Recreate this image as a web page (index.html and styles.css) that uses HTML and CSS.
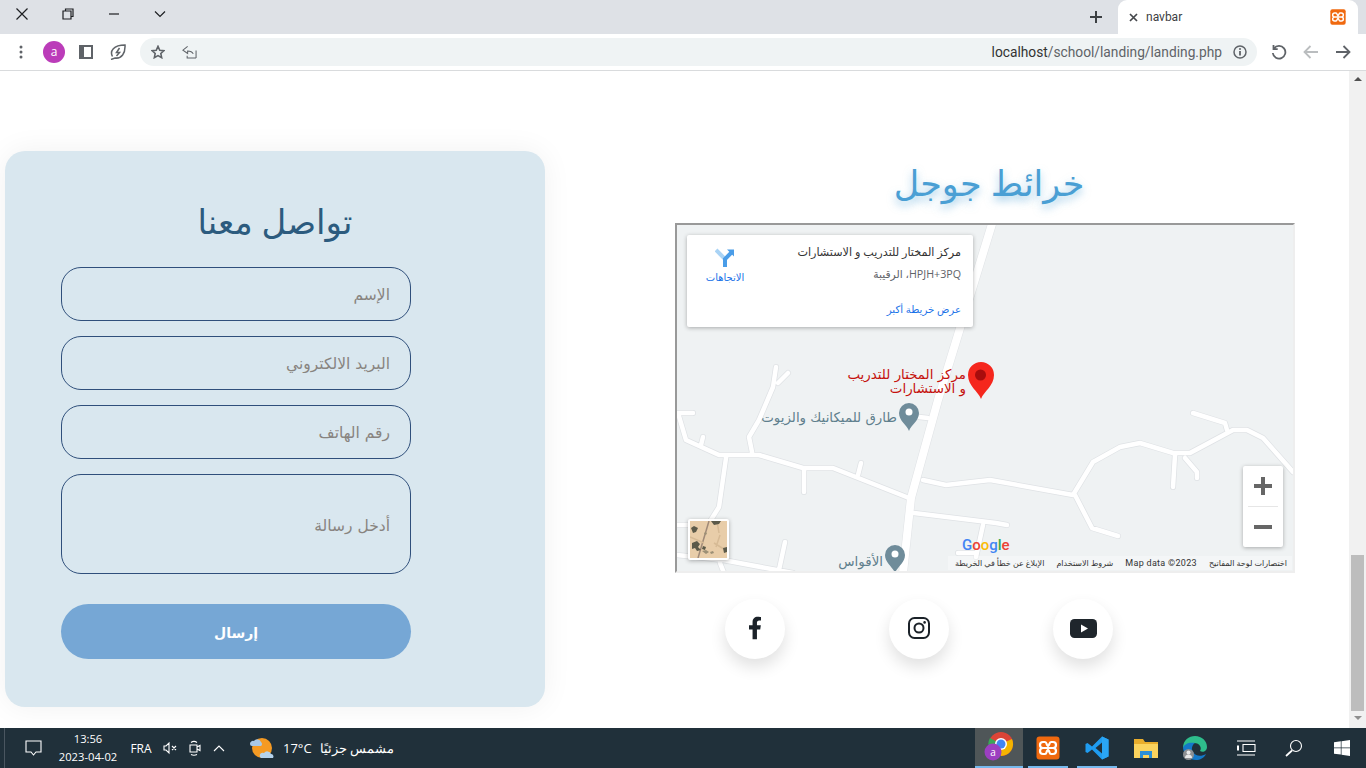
FILE: index.html
```html
<!DOCTYPE html>
<html lang="ar">
<head>
<meta charset="utf-8">
<title>navbar</title>
<link rel="stylesheet" href="styles.css">
</head>
<body>
<svg class="defs" width="0" height="0" aria-hidden="true">
  <symbol id="xampp" viewBox="0 0 24 24">
    <rect x="0.5" y="0.5" width="23" height="23" rx="3" fill="#f0690f"/>
    <path d="M9 6H7a3 3 0 0 0 0 6h2m0-6c2 0 1 3 3 4 2-1 1-4 3-4h2a3 3 0 0 1 0 6h-2c-1.500 0-2 0-3 0s-1.500 0-3 0M9 12H7a3 3 0 0 0 0 6h2c2 0 1-3 3-4 2 1 1 4 3 4h2a3 3 0 0 0 0-6h-2" fill="none" stroke="#fff" stroke-width="2.200"/>
  </symbol>
</svg>

<div class="window">
  <header class="tabbar">
    <div class="winbtn"><svg width="14" height="14" viewBox="0 0 14 14"><path d="M1.500 1.500l11 11m0-11l-11 11" class="s-dark"/></svg></div>
    <div class="winbtn"><svg width="12" height="12" viewBox="0 0 12 12"><path d="M3.500 2.500V1h7.500v7.500H9M1 3h8v8H1z" class="s-dark"/></svg></div>
    <div class="winbtn"><svg width="12" height="12" viewBox="0 0 12 12"><path d="M1 6h10" class="s-dark"/></svg></div>
    <div class="winbtn"><svg width="12" height="12" viewBox="0 0 12 12"><path d="M1 3.500l5 5 5-5" class="s-dark"/></svg></div>
    <div class="tab-spacer"></div>
    <div class="newtab"><svg width="12" height="12" viewBox="0 0 12 12"><path d="M6 0v12M0 6h12" class="s-plus"/></svg></div>
    <div class="tab">
      <svg class="tab-close" width="9" height="9" viewBox="0 0 9 9"><path d="M1 1l7 7m0-7L1 8" class="s-tabx"/></svg>
      <span class="tab-title">navbar</span>
      <svg class="favicon" width="16" height="16"><use href="#xampp"/></svg>
    </div>
  </header>

  <nav class="toolbar">
    <div class="tool w-dots"><svg width="4" height="14" viewBox="0 0 4 14"><circle cx="2" cy="2" r="1.500" class="f-grey"/><circle cx="2" cy="7" r="1.500" class="f-grey"/><circle cx="2" cy="12" r="1.500" class="f-grey"/></svg></div>
    <div class="tool w-avatar"><span class="avatar">a</span></div>
    <div class="tool w-panel"><svg width="14" height="14" viewBox="0 0 14 14"><path d="M0 0h14v14H0zM5 2v10h7V2z" fill="#5f6368" fill-rule="evenodd"/></svg></div>
    <div class="tool w-leaf"><svg width="16" height="16" viewBox="0 0 16 16"><path d="M2.500 12.500C-.5 7 3.500 1 15 1c.5 8.500-3.500 14-10 13L1 15.500M9.500 4L6.500 8.500h3L6.500 12" class="s-grey15"/></svg></div>
    <div class="omnibox">
      <svg class="omni-star" width="14" height="14" viewBox="0 0 16 16"><path d="M8 1.500l2 4.500 4.800.5-3.600 3.200 1 4.800L8 12.100l-4.200 2.400 1-4.800L1.200 6.500 6 6z" class="s-grey2"/></svg>
      <svg class="omni-share" width="15" height="14" viewBox="0 0 16 14"><path d="M6 1L1 5l5 3.500V6c3 0 5 1 6 3M15 13.500H5.500V11M15 13.500V5.500" class="s-grey1"/></svg>
      <div class="url"><span class="url-host">localhost</span>/school/landing/landing.php</div>
      <svg class="omni-info" width="14" height="14" viewBox="0 0 14 14"><circle cx="7" cy="7" r="6" class="s-grey15"/><path d="M7 6v4.500" class="s-grey2"/><circle cx="7" cy="3.900" r="1" class="f-grey"/></svg>
    </div>
    <div class="tool w-nav nav-first"><svg width="16" height="16" viewBox="0 0 16 16"><path d="M3 4.500A6.300 6.300 0 1 1 1.800 9M2.500 1v4.200h4.200" class="s-grey2"/></svg></div>
    <div class="tool w-nav"><svg width="16" height="14" viewBox="0 0 16 14"><path d="M15 7H2M7.500 1L1.500 7l6 6" class="s-light"/></svg></div>
    <div class="tool w-nav"><svg width="16" height="14" viewBox="0 0 16 14"><path d="M1 7h13M8.500 1l6 6-6 6" class="s-grey2"/></svg></div>
  </nav>

  <div class="viewport">
    <main class="page">
      <section class="contact-card">
        <h2 class="contact-title" dir="rtl">تواصل معنا</h2>
        <form class="contact-form" dir="rtl">
          <input class="field" type="text" placeholder="الإسم">
          <input class="field" type="email" placeholder="البريد الالكتروني">
          <input class="field" type="tel" placeholder="رقم الهاتف">
          <div class="field field-area"><span class="area-ph">أدخل رسالة</span></div>
          <button class="send" type="button">إرسال</button>
        </form>
      </section>

      <section class="map-col">
        <h1 class="map-title" dir="rtl">خرائط جوجل</h1>
        <div class="map">
          <svg class="map-canvas" width="616" height="348" viewBox="677 225 616 348">
            <rect x="677" y="225" width="616" height="348" fill="#eff2f3"/>
            <g class="roads-edge">
              <path d="M678 413H693M678 413L686 440L719 455H759L803 468H833L909 498M726 458L719 507L709 523M752 452L749 437L759 420L773 387L776 367M788 373L778 383M804 470V492M861 463L858 475M703 437L701 445M923 480L946 485L990 480L1073 495L1093 462L1120 447L1140 443L1173 453H1190L1233 430H1247L1263 438L1293 472M1075 495L1092 528L1118 536M1175 455L1173 487M1185 458L1197 472V478M1227 430L1225 423L1193 413M914 513L996 523L1007 525M983 525L976 557M958 553H976M676 525H688M676 555L723 560L793 573M785 542L779 570M919 417L928 418M720 563L724 573"/>
              <path class="road-main" d="M992 224L938 400L911 498L903 573"/>
            </g>
            <g class="roads">
              <path d="M678 413H693M678 413L686 440L719 455H759L803 468H833L909 498M726 458L719 507L709 523M752 452L749 437L759 420L773 387L776 367M788 373L778 383M804 470V492M861 463L858 475M703 437L701 445M923 480L946 485L990 480L1073 495L1093 462L1120 447L1140 443L1173 453H1190L1233 430H1247L1263 438L1293 472M1075 495L1092 528L1118 536M1175 455L1173 487M1185 458L1197 472V478M1227 430L1225 423L1193 413M914 513L996 523L1007 525M983 525L976 557M958 553H976M676 525H688M676 555L723 560L793 573M785 542L779 570M919 417L928 418M720 563L724 573"/>
              <path class="road-main" d="M992 224L938 400L911 498L903 573"/>
            </g>
            <path d="M981 399C978 391 968 386 968 375a13 13 0 0 1 26 0C994 386 984 391 981 399z" fill="#f5271d"/>
            <circle cx="980.500" cy="375" r="5.500" fill="#a80d0d"/>
            <path d="M909 431C907 425 899 421 899 413a10 10 0 0 1 20 0C919 421 911 425 909 431z" fill="#6f8c9a"/>
            <circle cx="909" cy="412" r="3.500" fill="#fff"/>
            <path d="M895 573C893 567 885 563 885 555a10 10 0 0 1 20 0C905 563 897 567 895 573z" fill="#6f8c9a"/>
            <circle cx="895" cy="554" r="3.500" fill="#fff"/>
            <g class="labels">
              <text class="lbl-red" x="966" y="379">مركز المختار للتدريب</text>
              <text class="lbl-red" x="966" y="393">و الاستشارات</text>
              <text class="lbl-grey" x="897" y="422">طارق للميكانيك والزيوت</text>
              <text class="lbl-grey" x="883" y="566">الأقواس</text>
            </g>
          </svg>

          <div class="map-info">
            <div class="info-dir">
              <svg width="20" height="20" viewBox="0 0 20 20"><path d="M1 2l9 9v8" class="s-dirlight"/><path d="M10 19v-8l7-7" class="s-dir"/><path d="M12 1.500h7v7z" fill="#4a9de8"/></svg>
              <span class="dir-label" dir="rtl">الاتجاهات</span>
            </div>
            <div class="info-main" dir="rtl">
              <div class="info-name">مركز المختار للتدريب و الاستشارات</div>
              <div class="info-code">HPJH+3PQ، الرقيبة</div>
              <div class="info-link">عرض خريطة أكبر</div>
            </div>
          </div>

          <div class="map-zoom">
            <div class="zoom-btn"><svg width="18" height="18" viewBox="0 0 18 18"><path d="M9 0v18M0 9h18" class="s-zoom"/></svg></div>
            <div class="zoom-sep"></div>
            <div class="zoom-btn"><svg width="18" height="18" viewBox="0 0 18 18"><path d="M0 9h18" class="s-zoom"/></svg></div>
          </div>

          <div class="map-thumb">
            <svg width="37" height="37" viewBox="0 0 37 37">
              <rect width="37" height="37" fill="#e8cda9"/>
              <path d="M19 0L8 37" stroke="#a08a78" stroke-width="1.500"/>
              <path d="M27 0l2 12M0 16l14 6M24 22l13 8M30 14l-4 12" stroke="#d6ba95" stroke-width="1.500"/>
              <path d="M1 7l3-2 4 2-2 4-3 1zM21 0h10l-2 3-5 1zM2 22l5-2 3 3-2 3 3 3-4 1-2-3-3 1zM33 27l4-1v5l-3 1zM13 25l3 1-1 3-3-1z" fill="#5c5a49"/>
              <path d="M12 30l4-1 3 2-3 2zM20 31l3-1 1 2-3 1zM15 11l2 1-1 2-2-1z" fill="#9c9076"/>
            </svg>
          </div>

          <div class="map-logo"><span class="g-b">G</span><span class="g-r">o</span><span class="g-y">o</span><span class="g-b">g</span><span class="g-g">l</span><span class="g-r">e</span></div>

          <div class="map-attr" dir="rtl">
            <span>اختصارات لوحة المفاتيح</span>
            <span class="attr-latin" dir="ltr">Map data ©2023</span>
            <span>شروط الاستخدام</span>
            <span>الإبلاغ عن خطأ في الخريطة</span>
          </div>
        </div>

        <div class="socials">
          <a class="social"><svg width="14" height="24" viewBox="0 0 320 512"><path d="M279.140 288l14.220-92.660h-88.910v-60.130c0-25.350 12.420-50.060 52.240-50.060h40.420V6.260S260.430 0 225.360 0c-73.220 0-121.080 44.380-121.080 124.720v70.620H22.890V288h81.390v224h100.170V288z" fill="#1b2229"/></svg></a>
          <a class="social"><svg width="22" height="22" viewBox="0 0 22 22"><rect x="1" y="1" width="20" height="20" rx="5.500" class="s-ig"/><circle cx="11" cy="11" r="4.500" class="s-ig"/><circle cx="16.600" cy="5.400" r="1.300" fill="#1b2229"/></svg></a>
          <a class="social"><svg width="27" height="19" viewBox="0 0 27 19"><rect width="27" height="19" rx="4.500" fill="#1f262c"/><path d="M11 5.500l7 4-7 4z" fill="#fff"/></svg></a>
        </div>
      </section>
    </main>

    <aside class="scrollbar">
      <div class="arrow-up"></div>
      <div class="sb-track"><div class="sb-thumb"></div></div>
      <div class="arrow-down"></div>
    </aside>
  </div>

  <footer class="taskbar">
    <div class="tb-edge"></div>
    <div class="tb-notify"><svg width="17" height="16" viewBox="0 0 17 16"><path d="M1 1h15v11h-5l-2.500 3-2.500-3H1z" class="s-white1"/></svg></div>
    <div class="tb-clock"><div>13:56</div><div>2023-04-02</div></div>
    <div class="tb-lang">FRA</div>
    <div class="tb-sys t-speaker"><svg width="15" height="14" viewBox="0 0 15 14"><path d="M1 5v4h2l3 3V2L3 5zM9 5l4 4m0-4L9 9" class="s-white1"/></svg></div>
    <div class="tb-sys t-meet"><svg width="12" height="16" viewBox="0 0 12 16"><path d="M1 5h7v7H1zM8 7l3-1.500v5L8 9M2 2.500c2-1.500 4-1.500 6 0M2 14.500c2 1 4 1 6 0" class="s-white1"/></svg></div>
    <div class="tb-sys t-up"><svg width="12" height="7" viewBox="0 0 12 7"><path d="M1 6l5-5 5 5" class="s-white1"/></svg></div>
    <div class="tb-weather">
      <svg width="26" height="26" viewBox="0 0 26 26"><circle cx="13" cy="13" r="10" fill="#f59a23"/><path d="M1 9a3 3 0 0 1 4-3 4 4 0 0 1 7 1 2.500 2.500 0 0 1 0 4H3a2 2 0 0 1-2-2z" fill="#a8c8e8"/><path d="M11 22a3 3 0 0 1 4-4 4 4 0 0 1 7 1 2.500 2.500 0 0 1 2 4H12z" fill="#b5d2ec"/></svg>
      <span class="tb-temp">17°C</span>
      <span class="tb-cond" dir="rtl">مشمس جزئيًا</span>
    </div>
    <div class="tb-spacer"></div>
    <div class="tb-app active">
      <svg width="36" height="34" viewBox="0 0 36 34">
        <circle cx="20" cy="13" r="12" fill="#db4437"/>
        <path d="M20 25A12 12 0 0 0 31 8L20 13z" fill="#f4b400"/>
        <path d="M20 25A12 12 0 0 1 9 7l11 6z" fill="#3aa757"/>
        <circle cx="20" cy="13" r="6" fill="#fff"/><circle cx="20" cy="13" r="4.500" fill="#4285f4"/>
        <circle cx="12" cy="21" r="8.500" fill="#9c3fc0"/>
        <text class="chrome-a" x="12" y="24.500">a</text>
      </svg>
    </div>
    <div class="tb-app app-xampp"><svg width="24" height="24"><use href="#xampp"/></svg></div>
    <div class="tb-app app-code">
      <svg width="24" height="24" viewBox="0 0 24 24"><path d="M17 .5L23.500 3.500v17L17 23.500 7 13.500l-4.500 3.500L.5 16V8l2-1L7 10.500z" fill="#1f9cf0"/><path d="M17 6.500L10.500 12 17 17.500z" fill="#20303a"/><path d="M17 .5v23l6.500-3v-17z" fill="#2aa6f5"/></svg>
    </div>
    <div class="tb-app app-files">
      <svg width="24" height="22" viewBox="0 0 24 22"><path d="M0 2h9l2 3h13v16H0z" fill="#e9ad2c"/><path d="M0 7h24v14H0z" fill="#fbd35e"/><path d="M6 21v-7h12v7h-3v-3H9v3z" fill="#2b8fd8"/></svg>
    </div>
    <div class="tb-app app-edge">
      <svg width="26" height="26" viewBox="0 0 26 26"><path d="M1 13C1 5 7 1 13 1c7 0 12 5 12 11 0 4-4 6-7 4 2-3 0-8-6-8-6 0-9 4-11 5z" fill="#2ebd8c"/><path d="M1 13c1 8 7 12 13 12 4 0 8-2 10-6-5 3-11 2-13-2-2-3-1-7 2-9C7 7 2 9 1 13z" fill="#1478c8"/><circle cx="6.500" cy="19.500" r="5.500" fill="#8d8f92"/><circle cx="6.500" cy="17.500" r="2" fill="#e8e8e8"/><path d="M3 23a3.500 3.500 0 0 1 7 0z" fill="#e8e8e8"/></svg>
    </div>
    <div class="tb-sys2 t-view"><svg width="20" height="16" viewBox="0 0 20 16"><path d="M1 1h18M1 15h18M7 4.500h12v7H7z" class="s-white1"/><path d="M1 5.500h2v5H1z" fill="#fff"/></svg></div>
    <div class="tb-sys2"><svg width="18" height="18" viewBox="0 0 18 18"><circle cx="11" cy="7" r="5.500" class="s-white1"/><path d="M7 11.500L1 17" class="s-white15"/></svg></div>
    <div class="tb-sys2"><svg width="16" height="16" viewBox="0 0 16 16"><path d="M0 2.300l6.800-1v6.200H0zM7.500 1.200L16 0v7.500H7.500zM0 8.300h6.800v6.300L0 13.700zM7.500 8.300H16V16l-8.500-1.200z" fill="#fff"/></svg></div>
  </footer>
</div>
</body>
</html>
```

FILE: styles.css
```css
* { box-sizing: border-box; }
html, body { margin: 0; height: 100%; overflow: hidden; }
body { font-family: "Open Sans", "DejaVu Sans", sans-serif; background: #fff; color: #222; }
.defs { display: block; width: 0; height: 0; }
.window { width: 1366px; height: 768px; display: flex; flex-direction: column; }

/* stroke helpers */
.s-dark { fill: none; stroke: #1d1f22; stroke-width: 1.2; }
.s-plus { fill: none; stroke: #3c4043; stroke-width: 2; }
.s-tabx { fill: none; stroke: #45484c; stroke-width: 1.700; }
.s-grey1 { fill: none; stroke: #5f6368; stroke-width: 1.100; }
.s-grey15 { fill: none; stroke: #5f6368; stroke-width: 1.500; }
.s-grey2 { fill: none; stroke: #5f6368; stroke-width: 1.800; }
.s-light { fill: none; stroke: #babdbf; stroke-width: 1.800; }
.f-grey { fill: #5f6368; }
.s-white1 { fill: none; stroke: #fff; stroke-width: 1.100; }
.s-white15 { fill: none; stroke: #fff; stroke-width: 1.700; }
.s-ig { fill: none; stroke: #1b2229; stroke-width: 2; }
.s-dir { fill: none; stroke: #4a9de8; stroke-width: 4; }
.s-dirlight { fill: none; stroke: #a9d3f5; stroke-width: 4; }
.s-zoom { fill: none; stroke: #666; stroke-width: 4; }

/* tab strip */
.tabbar { height: 34px; background: #dee1e6; display: flex; align-items: stretch; flex: none; }
.winbtn { width: 46px; display: flex; align-items: center; justify-content: center; padding-bottom: 6px; }
.winbtn:first-child { margin-left: -1px; }
.tab-spacer { flex: 1; }
.newtab { width: 44px; display: flex; align-items: center; justify-content: center; }
.tab { width: 240px; margin-right: 8px; background: #fff; border-radius: 9px 9px 0 0; display: flex; align-items: center; padding: 0 12px; }
.tab-close { margin-left: -1px; }
.tab-title { font: 12px "Roboto", sans-serif; margin-left: 8px; color: #3c4043; flex: 1; }
.favicon { flex: none; }

/* toolbar */
.toolbar { height: 37px; background: #fff; border-bottom: 1px solid #d9dbdd; display: flex; align-items: center; padding: 0 7px 1px 0; flex: none; }
.tool { display: flex; align-items: center; justify-content: center; flex: none; }
.w-dots { width: 42px; }
.w-avatar { width: 24px; }
.w-panel { width: 40px; }
.w-leaf { width: 24px; }
.w-nav { width: 32px; }
.nav-first { margin-left: 6px; }
.avatar { width: 22px; height: 22px; border-radius: 50%; background: #bb3cb9; color: #fff; font: 12px/22px "Open Sans", sans-serif; text-align: center; }
.omnibox { flex: 1; height: 28px; margin-left: 10px; background: #eff3f4; border-radius: 14px; display: flex; align-items: center; padding: 0 10px 0 11px; }
.omni-share { margin-left: 17px; }
.url { flex: 1; text-align: right; font: 13.750px "Roboto", sans-serif; color: #5f6368; margin-right: 11px; white-space: nowrap; }
.url-host { color: #333; }

/* page */
.viewport { flex: 1; display: flex; min-height: 0; }
.page { flex: 1; min-width: 0; display: flex; align-items: flex-start; padding: 80px 0 0 5px; overflow: hidden; background: #fff; }
.scrollbar { width: 17px; flex: none; background: #f1f1f1; display: flex; flex-direction: column; align-items: center; }
.arrow-up { width: 0; height: 0; margin: 6px 0; border: 4px solid transparent; border-top: 0; border-bottom: 4px solid #505050; }
.arrow-down { width: 0; height: 0; margin: 5px 0 8px; border: 4px solid transparent; border-bottom: 0; border-top: 4px solid #8f8f8f; }
.sb-track { flex: 1; width: 100%; display: flex; flex-direction: column; justify-content: flex-end; padding: 0 2px; }
.sb-thumb { height: 156px; background: #bdbdbd; }

/* contact card */
.contact-card { width: 540px; height: 556px; flex: none; background: #d9e7ef; border-radius: 20px; box-shadow: 0 0 30px rgba(0, 0, 0, .06); padding: 46px 134px 0 56px; }
.contact-title { margin: 0 -78px 0 0; height: 70px; font-size: 34px; font-weight: 400; line-height: 48px; text-align: center; color: #2c5b7e; }
.contact-form { display: flex; flex-direction: column; gap: 15px; }
.field { width: 350px; height: 54px; border: 1px solid #2f4f7b; border-radius: 20px; background: transparent; padding: 1px 20px 0; font: 15.500px "DejaVu Sans", sans-serif; color: #333; text-align: right; outline: none; }
.field::placeholder { color: #888480; opacity: 1; }
.field-area { height: 100px; display: flex; align-items: center; padding-top: 3px; }
.area-ph { color: #888480; }
.send { width: 350px; height: 55px; margin-top: 15px; border: 0; border-radius: 28px; background: #76a7d5; color: #fff; font: 700 14px "DejaVu Sans", sans-serif; padding: 2px 0 0; }

/* map column */
.map-col { width: 620px; margin-left: 130px; flex: none; }
.map-title { margin: 0; height: 72px; font-size: 35px; font-weight: 400; line-height: 64px; text-align: center; padding-left: 8px; color: #4a9fd4; text-shadow: 0 4px 8px rgba(74, 159, 212, .55); }
.map { position: relative; width: 620px; height: 350px; border-style: solid; border-width: 2px; border-color: #999 #eee #eee #999; overflow: hidden; background: #eff2f3; }
.map-canvas { display: block; }
.roads-edge path { fill: none; stroke: #dfe2e5; stroke-width: 6; stroke-linecap: round; stroke-linejoin: round; }
.roads path { fill: none; stroke: #fff; stroke-width: 4.500; stroke-linecap: round; stroke-linejoin: round; }
.roads-edge .road-main { stroke-width: 9; }
.roads .road-main { stroke-width: 8; }
.labels text { text-anchor: end; font-family: "DejaVu Sans", sans-serif; }
.lbl-red { font-size: 13.400px; fill: #c5110d; }
.lbl-grey { font-size: 13.400px; fill: #5f7f8d; }

.map-info { position: absolute; left: 10px; top: 10px; width: 286px; height: 92px; background: #fff; border-radius: 2px; box-shadow: 0 1px 4px rgba(0, 0, 0, .3); display: flex; }
.info-dir { width: 76px; display: flex; flex-direction: column; align-items: center; padding-top: 13px; gap: 2px; }
.dir-label { font-size: 10px; color: #1a73e8; white-space: nowrap; }
.info-main { flex: 1; padding: 8px 12px 0 0; text-align: right; }
.info-name { font-size: 11.200px; line-height: 18px; color: #333; white-space: nowrap; }
.info-code { font-size: 10.700px; line-height: 18px; margin-top: 4px; color: #5f6368; }
.info-link { font-size: 10.200px; line-height: 14px; margin-top: 19px; color: #1a73e8; }

.map-zoom { position: absolute; right: 10px; top: 241px; width: 40px; height: 81px; background: #fff; border-radius: 2px; box-shadow: 0 1px 4px rgba(0, 0, 0, .3); display: flex; flex-direction: column; align-items: center; }
.zoom-btn { flex: 1; display: flex; align-items: center; justify-content: center; }
.zoom-sep { width: 30px; height: 1px; background: #e6e6e6; }
.map-thumb { position: absolute; left: 11px; top: 294px; width: 41px; height: 41px; border: 2px solid #fff; border-radius: 2px; box-shadow: 0 1px 4px rgba(0, 0, 0, .3); background: #fff; }
.map-thumb svg { display: block; }
.map-logo { position: absolute; left: 285px; top: 310px; font: 500 15px/20px "Roboto", sans-serif; }
.g-b { color: #4285f4; } .g-r { color: #ea4335; } .g-y { color: #fbbc05; } .g-g { color: #34a853; }
.map-attr { position: absolute; right: 1px; bottom: 1px; height: 14px; display: flex; }
.map-attr span { font-size: 8px; line-height: 14px; padding: 0 5px 0 7px; color: #333; background: rgba(255, 255, 255, .35); white-space: nowrap; }
.map-attr .attr-latin { font-family: "Roboto", sans-serif; font-size: 9px; letter-spacing: .3px; }

.socials { display: flex; gap: 104px; padding: 26px 0 0 50px; }
.social { width: 60px; height: 60px; border-radius: 50%; background: #fff; box-shadow: 0 8px 16px rgba(0, 0, 0, .12); display: flex; align-items: center; justify-content: center; padding-bottom: 2px; }

/* taskbar */
.taskbar { height: 40px; flex: none; background: #20303a; color: #fff; display: flex; align-items: center; font-family: "Open Sans", sans-serif; }
.tb-edge { width: 1px; height: 40px; margin-left: 4px; background: #4a5660; }
.tb-notify { width: 30px; margin-left: 13px; display: flex; justify-content: center; }
.tb-clock { width: 70px; margin-left: 5px; text-align: center; font-size: 11.200px; line-height: 18px; }
.tb-lang { width: 36px; text-align: center; font-size: 12px; }
.tb-sys { display: flex; justify-content: center; }
.t-speaker { width: 22px; }
.t-meet { width: 26px; margin-left: 1px; }
.t-up { width: 22px; }
.tb-weather { display: flex; align-items: center; margin-left: 19px; }
.tb-temp { font-size: 13px; margin-left: 8px; }
.tb-cond { font-size: 13px; margin-left: 8px; }
.tb-spacer { flex: 1; }
.tb-app { height: 40px; display: flex; align-items: center; justify-content: center; border-bottom: 2px solid #76b9ed; padding-top: 2px; }
.tb-app.active { width: 48px; background: #4f5658; }
.app-xampp { width: 40px; margin-left: 5px; }
.app-code { width: 40px; margin-left: 9px; }
.app-files { width: 40px; margin-left: 9px; border-bottom-color: transparent; }
.app-edge { width: 40px; margin-left: 9px; border-bottom-color: transparent; }
.chrome-a { font: 10px "Open Sans", sans-serif; fill: #fff; text-anchor: middle; }
.tb-sys2 { height: 40px; width: 48px; display: flex; align-items: center; justify-content: center; }
.t-view { margin-left: 7px; }
```
